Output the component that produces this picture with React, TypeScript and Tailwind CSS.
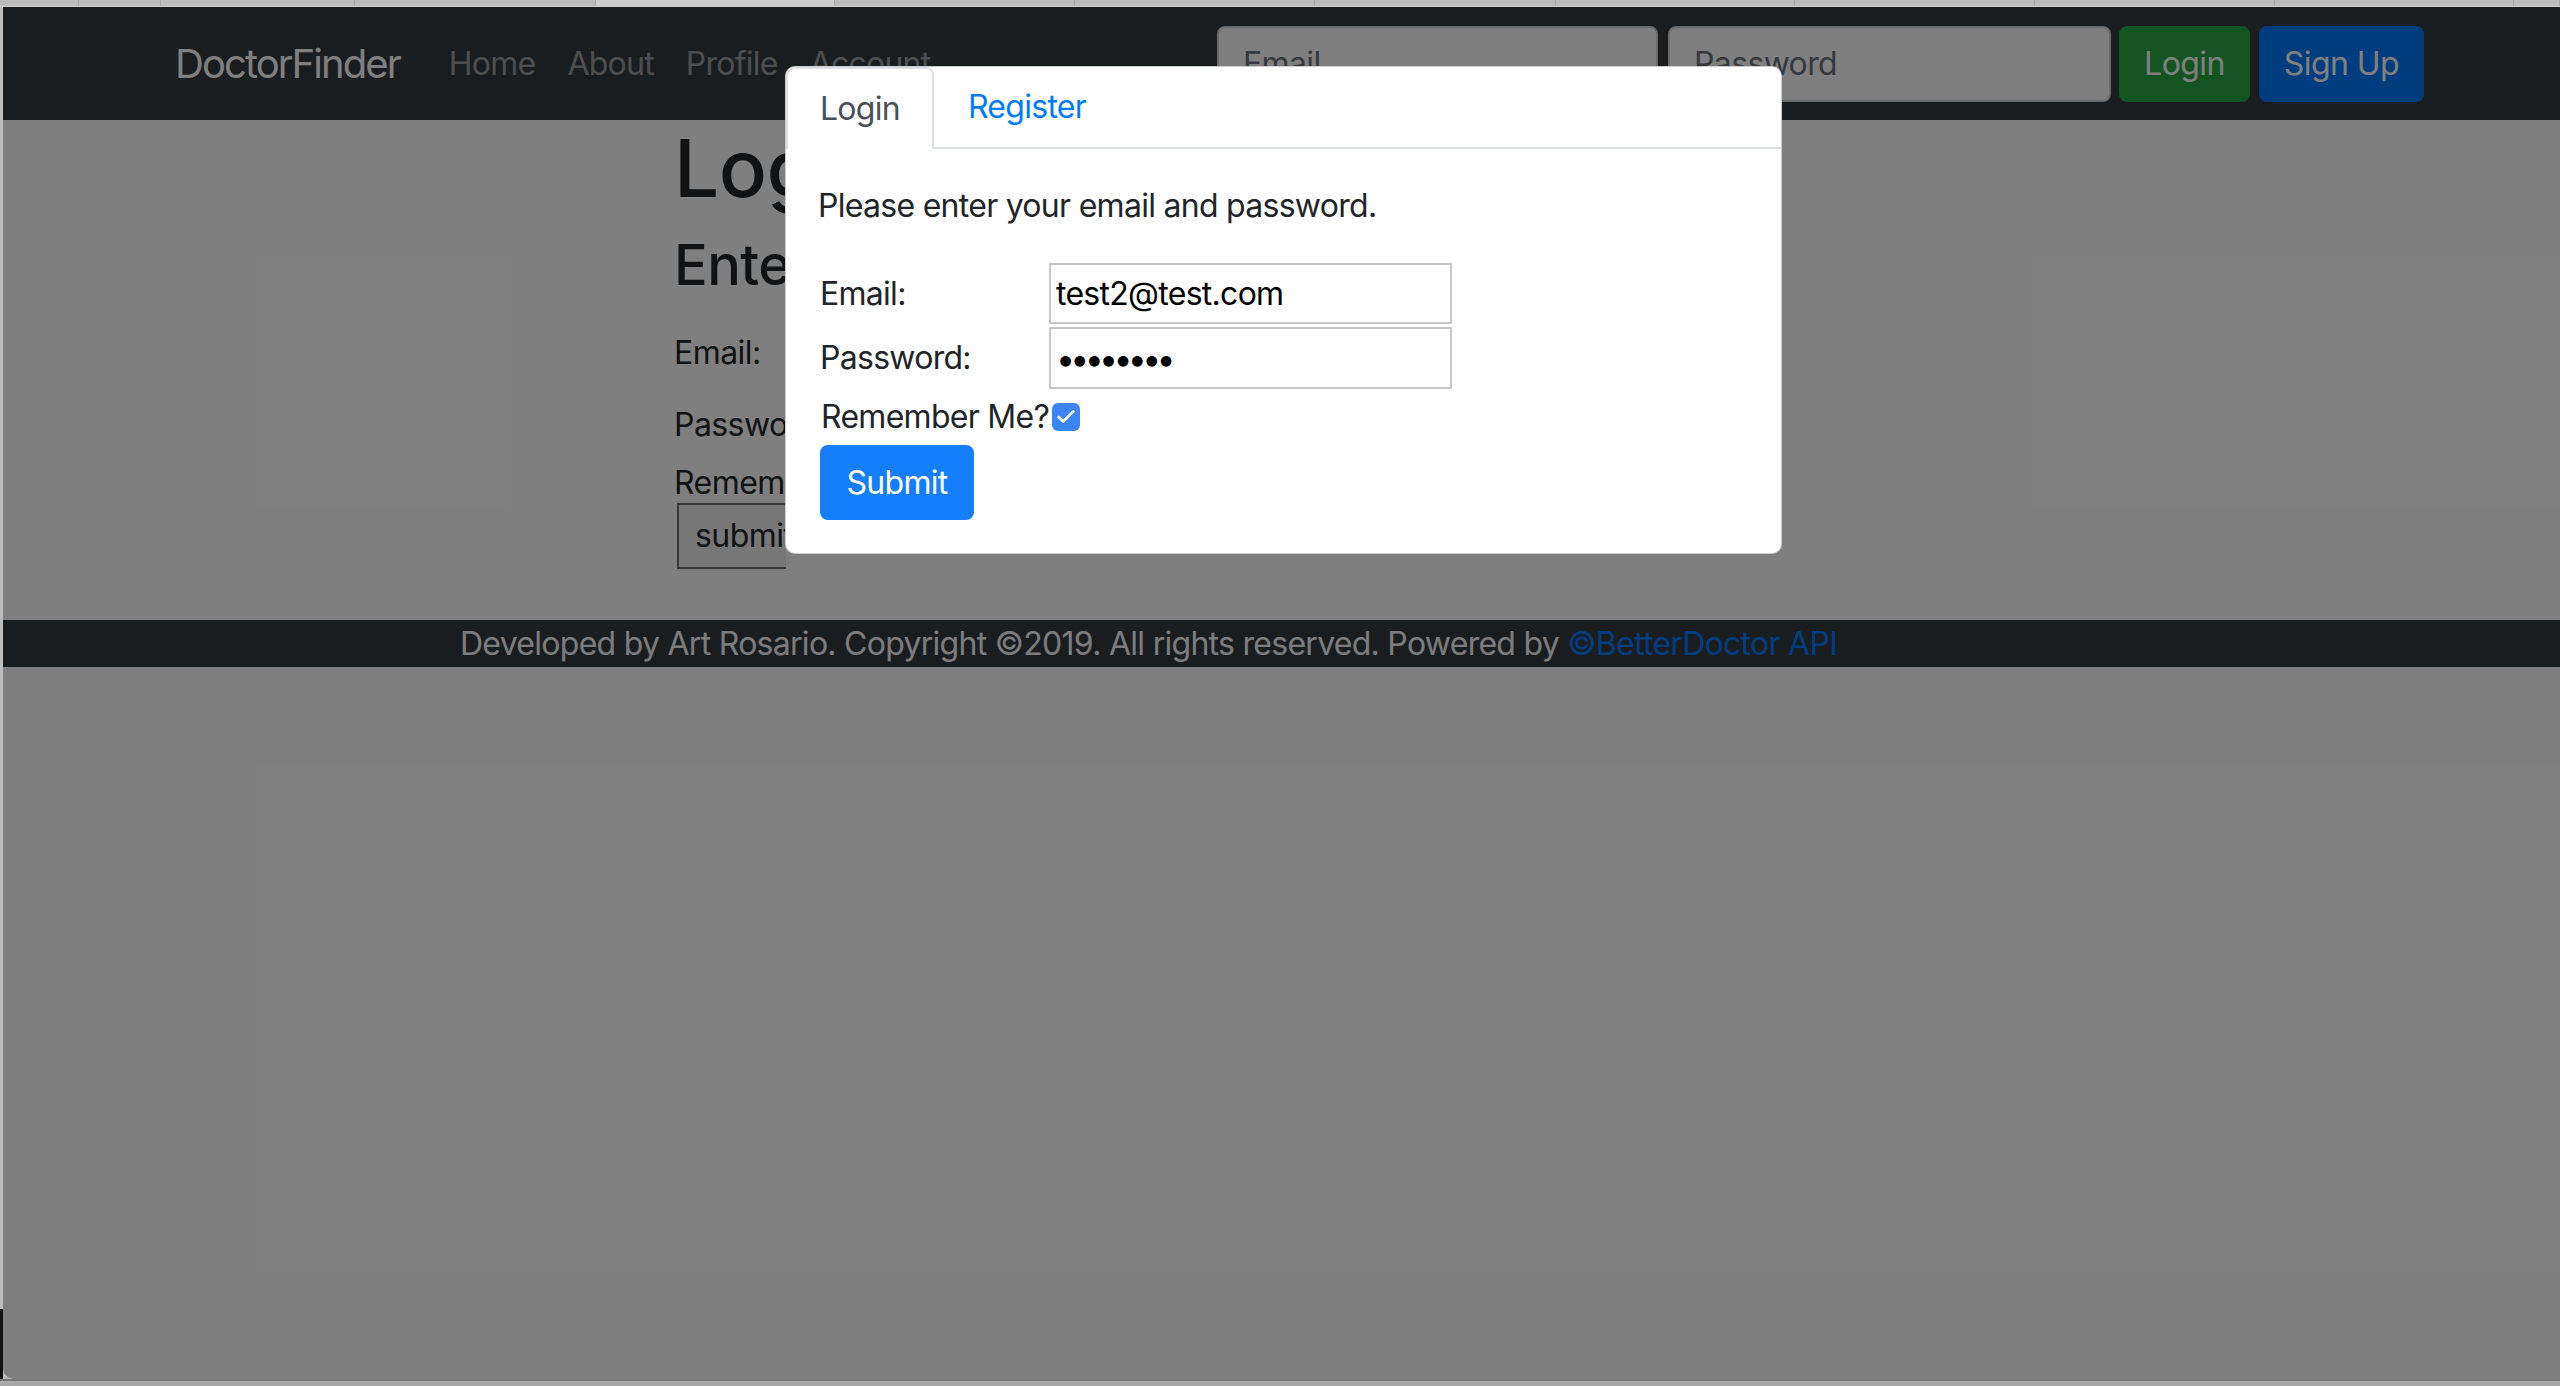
import { Check } from "lucide-react";

const tabEdges = [79, 161, 355, 596, 835, 1075, 1315, 1556, 1795, 2035, 2275, 2514, 2560];

function BrowserTabs() {
  let prev = 0;
  return (
    <div className="flex h-[7px] bg-[#bcbcbc] border-b border-[#d2d2d2]">
      {tabEdges.map((edge, i) => {
        const w = edge - prev;
        prev = edge;
        return (
          <div
            key={edge}
            style={{ width: w }}
            className={
              i === 4
                ? "h-full bg-[#cdcdcd] border-r border-[#a5a5a5]"
                : "h-full border-r border-[#a5a5a5]"
            }
          />
        );
      })}
    </div>
  );
}

function Navbar() {
  return (
    <nav className="h-[113px] bg-[#343a40] flex items-center pl-[172px] pr-[136px]">
      <span className="text-[40px] leading-[60px] text-white mr-[33px] tracking-[-0.048em]">DoctorFinder</span>
      <ul className="flex text-[32px] leading-[48px] text-white/50 tracking-[-0.024em]">
        <li className="px-[16px]">Home</li>
        <li className="px-[16px]">About</li>
        <li className="px-[16px]">Profile</li>
        <li className="px-[16px]">Account</li>
      </ul>
      <form className="ml-auto flex items-center">
        <input
          placeholder="Email"
          className="w-[441px] h-[76px] mr-[10px] bg-white border-2 border-[#ced4da] rounded-[8px] px-[24px] text-[32px] tracking-[-0.02em] placeholder:text-[#6c757d]"
        />
        <input
          placeholder="Password"
          className="w-[443px] h-[76px] mr-[8px] bg-white border-2 border-[#ced4da] rounded-[8px] px-[24px] text-[32px] tracking-[-0.02em] placeholder:text-[#6c757d]"
        />
        <button type="button" className="w-[131px] h-[76px] mr-[9px] rounded-[8px] bg-[#28a745] text-white text-[32px]">
          Login
        </button>
        <button type="button" className="w-[165px] h-[76px] rounded-[8px] bg-[#007bff] text-white text-[32px]">
          Sign Up
        </button>
      </form>
    </nav>
  );
}

function PageBehind() {
  // only the part left of the modal shows, so the column is clipped there
  return (
    <main className="h-[500px] bg-white pl-[671px] text-[#212529]">
      <div className="w-[112px] overflow-hidden whitespace-nowrap">
        <h1 className="text-[80px] leading-[96px] font-medium">Login</h1>
        <h3 className="mt-[16px] text-[56px] leading-[67px] font-medium">Enter</h3>
        <div className="mt-[30px] text-[32px] leading-[48px]">Email:</div>
        <div className="mt-[24px] text-[32px] leading-[48px]">Password:</div>
        <div className="mt-[10px] text-[32px] leading-[48px]">Remember</div>
        <button
          type="button"
          className="mt-[-4px] ml-[3px] w-[130px] h-[66px] border-2 border-[#6f6f6f] bg-[#efefef] text-[32px] text-left pl-[16px]"
        >
          submit
        </button>
      </div>
    </main>
  );
}

function Footer() {
  return (
    <footer className="h-[47px] bg-[#343a40] flex items-center pl-[457px] text-[32px] leading-[40px] text-[#f8f9fa] tracking-[-0.0225em]">
      <span>
        Developed by Art Rosario. Copyright ©2019. All rights reserved. Powered by{" "}
        <span className="text-[#007bff]">©BetterDoctor API</span>
      </span>
    </footer>
  );
}

function LoginModal() {
  return (
    <div className="absolute left-[782px] top-[59px] w-[997px] h-[488px] bg-white rounded-[10px] border border-black/20 overflow-hidden tracking-[-0.045em]">
      <div className="flex h-[82px] border-b-2 border-[#dee2e6]">
        <div className="-mb-[2px] h-[82px] border-2 border-b-0 border-[#dee2e6] bg-white rounded-tl-[9px] rounded-tr-[8px] px-[32px] flex items-center text-[32px] text-[#495057]">
          Login
        </div>
        <div className="px-[32px] ml-[2px] flex items-center text-[32px] text-[#007bff]">Register</div>
      </div>
      <div className="px-[32px] pt-[33px] text-[#212529]">
        <p className="text-[32px] leading-[48px] mb-[33px]">Please enter your email and password.</p>
        <div className="grid grid-cols-[231px_403px] gap-y-[3px] items-center text-[32px]">
          <label className="pl-[2px]">Email:</label>
          <input
            defaultValue="test2@test.com"
            className="h-[61px] border-2 border-[#c8c8c8] px-[5px] text-[32px] text-black"
          />
          <label className="pl-[2px]">Password:</label>
          <input
            type="password"
            defaultValue="password"
            className="h-[62px] border-2 border-[#c8c8c8] px-[5px] text-[34px] text-black tracking-[-0.14em]"
          />
        </div>
        <div className="mt-[4px] flex items-center h-[48px] pl-[3px] text-[32px]">
          <span>Remember Me?</span>
          <span className="ml-[3px] w-[28px] h-[28px] rounded-[6px] bg-[#3b85f6] flex items-center justify-center">
            <Check className="w-[22px] h-[22px] text-white" strokeWidth={3} />
          </span>
        </div>
        <button
          type="button"
          className="mt-[4px] ml-[2px] w-[154px] h-[75px] rounded-[8px] bg-[#157efb] text-white text-[32px]"
        >
          Submit
        </button>
      </div>
    </div>
  );
}

export default function App() {
  return (
    <div className="w-[2560px] h-[1386px] overflow-hidden flex flex-col bg-[#bcbcbc] tracking-[-0.035em] [font-family:Inter,'Liberation_Sans',sans-serif]">
      <BrowserTabs />
      <div className="flex flex-1 min-h-0">
        <div className="w-[3px] flex flex-col">
          <div className="flex-1 bg-[#bdbdbd]" />
          <div className="h-[70px] bg-[#111]" />
        </div>
        <div className="relative flex-1 flex flex-col bg-white rounded-bl-[10px] overflow-hidden">
          <Navbar />
          <PageBehind />
          <Footer />
          <div className="flex-1 bg-white" />
          <div className="absolute inset-0 bg-black/50" />
          <LoginModal />
        </div>
      </div>
      <div className="h-[7px] bg-[#a9a9a9] border-t-2 border-[#777]" />
    </div>
  );
}
